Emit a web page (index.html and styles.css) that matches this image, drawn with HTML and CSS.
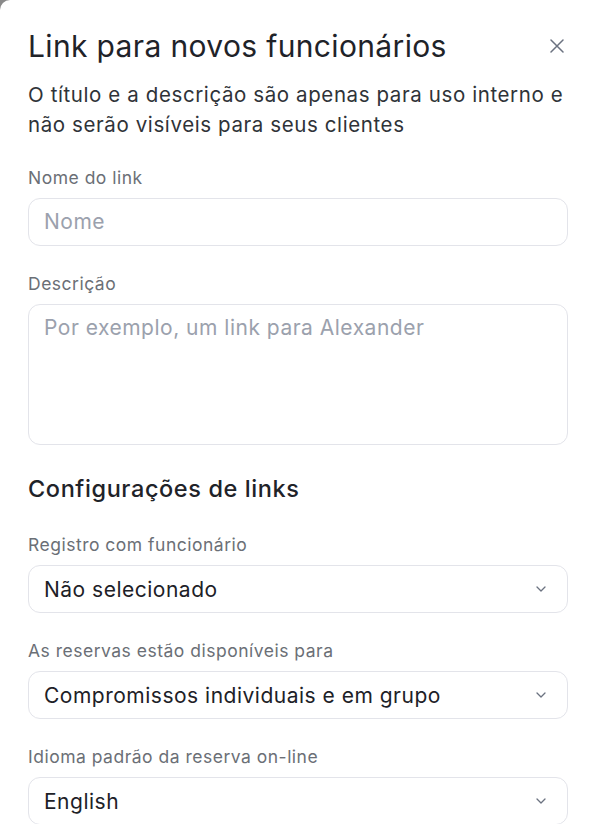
FILE: index.html
```html
<!DOCTYPE html>
<html lang="pt">
<head>
<meta charset="utf-8">
<link rel="stylesheet" href="styles.css">
</head>
<body>
<div class="panel">
  <div class="header">
    <h1 class="title">Link para novos funcionários</h1>
    <button class="close" aria-label="Fechar">
      <svg width="14" height="14" viewBox="0 0 14 14"><path d="M1 1L13 13M13 1L1 13" stroke="#6b7280" stroke-width="1.5" stroke-linecap="round" fill="none"/></svg>
    </button>
  </div>
  <p class="subtitle">O título e a descrição são apenas para uso interno e não serão visíveis para seus clientes</p>

  <div class="field">
    <label class="label">Nome do link</label>
    <div class="input"><span class="placeholder">Nome</span></div>
  </div>

  <div class="field">
    <label class="label">Descrição</label>
    <div class="input textarea"><span class="placeholder">Por exemplo, um link para Alexander</span></div>
  </div>

  <h2 class="section">Configurações de links</h2>

  <div class="field first">
    <label class="label">Registro com funcionário</label>
    <div class="input select"><span class="value">Não selecionado</span>
      <svg class="chev" width="10" height="6" viewBox="0 0 10 6"><path d="M1 1L5 5L9 1" stroke="#6b7280" stroke-width="1.3" fill="none" stroke-linecap="round" stroke-linejoin="round"/></svg>
    </div>
  </div>

  <div class="field">
    <label class="label">As reservas estão disponíveis para</label>
    <div class="input select"><span class="value">Compromissos individuais e em grupo</span>
      <svg class="chev" width="10" height="6" viewBox="0 0 10 6"><path d="M1 1L5 5L9 1" stroke="#6b7280" stroke-width="1.3" fill="none" stroke-linecap="round" stroke-linejoin="round"/></svg>
    </div>
  </div>

  <div class="field">
    <label class="label">Idioma padrão da reserva on-line</label>
    <div class="input select"><span class="value">English</span>
      <svg class="chev" width="10" height="6" viewBox="0 0 10 6"><path d="M1 1L5 5L9 1" stroke="#6b7280" stroke-width="1.3" fill="none" stroke-linecap="round" stroke-linejoin="round"/></svg>
    </div>
  </div>
</div>
</body>
</html>
```

FILE: styles.css
```css
* { box-sizing: border-box; }
html, body { margin: 0; padding: 0; }
body {
  background: #8a8a8a;
  font-family: Inter, "Noto Sans", sans-serif;
  height: 824px;
  overflow: hidden;
}
.panel {
  background: #fff;
  border-top-left-radius: 10px;
  min-height: 824px;
  padding: 28px 28px 0 28px;
}
.header {
  display: flex;
  align-items: center;
  justify-content: space-between;
}
.title {
  margin: 0;
  font-size: 30px;
  line-height: 36px;
  letter-spacing: 0.35px;
  font-weight: 400;
  color: #1f2329;
}
.close {
  border: 0;
  background: none;
  padding: 0;
  margin-right: 4px;
  width: 14px;
  height: 14px;
  display: flex;
}
.subtitle {
  margin: 16px 0 0 0;
  font-size: 20.5px;
  line-height: 30px;
  letter-spacing: 0.6px;
  color: #2f3338;
}
.field {
  display: flex;
  flex-direction: column;
  gap: 8px;
  margin-top: 26px;
}
.field.first { margin-top: 29px; }
.label {
  font-size: 17.5px;
  line-height: 24px;
  letter-spacing: 0.5px;
  color: #6b6f76;
}
.input {
  height: 48px;
  border: 1px solid #e3e4ea;
  border-radius: 12px;
  padding: 0 15px;
  display: flex;
  align-items: center;
  font-size: 21px;
  letter-spacing: 0.5px;
}
.textarea {
  height: 141px;
  align-items: flex-start;
  padding-top: 9px;
}
.placeholder { color: #9ba1ad; line-height: 28px; }
.value { color: #1d2127; flex: 1; }
.select { padding-right: 21px; }
.chev { flex: none; }
.section {
  margin: 29px 0 0 0;
  font-size: 23.5px;
  line-height: 30px;
  letter-spacing: 0.6px;
  font-weight: 500;
  color: #1f2329;
}
```
